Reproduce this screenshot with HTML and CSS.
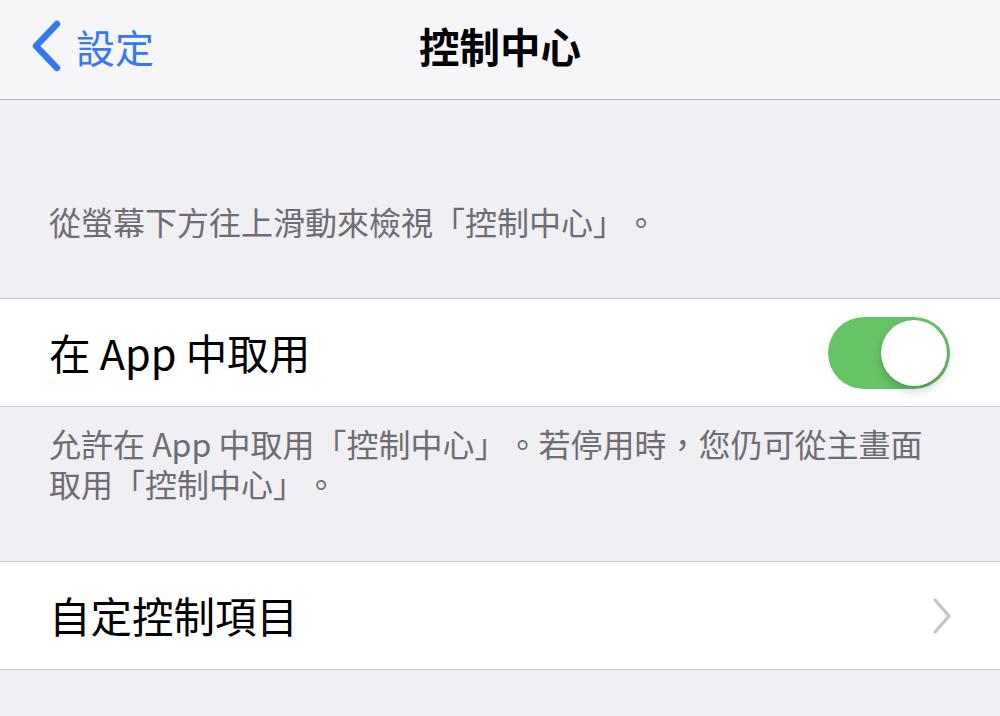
FILE: index.html
```html
<!DOCTYPE html>
<html lang="zh-Hant">
<head>
  <meta charset="UTF-8">
  <meta name="viewport" content="width=device-width, initial-scale=1.0">
  <title>控制中心</title>
  <link rel="stylesheet" href="styles.css">
</head>
<body>
  <div class="nav-bar">
    <div class="back-button">
      <svg class="back-icon" width="32" height="52" viewBox="0 0 32 52">
        <path d="M27 4 L6 26 L27 48" fill="none" stroke="#3478f6" stroke-width="6.5" stroke-linecap="round" stroke-linejoin="round"/>
      </svg>
      <span class="back-text">設定</span>
    </div>
    <h1 class="nav-title">控制中心</h1>
  </div>

  <div class="section-header">
    <p>從螢幕下方往上滑動來檢視「控制中心」。</p>
  </div>

  <div class="group">
    <div class="row">
      <span class="row-label">在 App 中取用</span>
      <div class="switch on">
        <div class="knob"></div>
      </div>
    </div>
  </div>

  <div class="section-footer">
    <p>允許在 App 中取用「控制中心」。若停用時，您仍可從主畫面<br>取用「控制中心」。</p>
  </div>

  <div class="group">
    <div class="row">
      <span class="row-label">自定控制項目</span>
      <svg class="chevron" width="20" height="38" viewBox="0 0 20 38">
        <path d="M3 3 L17 19 L3 35" fill="none" stroke="#c4c4c8" stroke-width="3.2" stroke-linecap="round" stroke-linejoin="round"/>
      </svg>
    </div>
  </div>
</body>
</html>
```

FILE: styles.css
```css
body {
    margin: 0;
    background-color: #efeff4;
    font-family: "Noto Sans CJK TC", "Noto Sans", sans-serif;
    color: #000;
    text-spacing-trim: space-all;
}

p {
    margin: 0;
}

.nav-bar {
    height: 99px;
    background-color: #f6f6f8;
    border-bottom: 1px solid #b4b4b8;
    display: flex;
    align-items: center;
    justify-content: center;
    position: relative;
}

.back-button {
    position: absolute;
    left: 30px;
    top: 0;
    height: 92px;
    display: flex;
    align-items: center;
    gap: 14px;
    color: #3478f6;
}

.back-icon {
    display: block;
}

.back-text {
    font-size: 39px;
    line-height: 1;
}

.nav-title {
    margin: 0 0 7px 0;
    font-size: 40.5px;
    font-weight: 700;
    line-height: 1;
}

.section-header {
    height: 141px;
    padding: 0 49px 57px;
    display: flex;
    flex-direction: column;
    justify-content: flex-end;
    font-size: 32px;
    line-height: 40px;
    color: #6d6d72;
}

.group {
    background-color: #fff;
    border-top: 1px solid #c8c7cc;
    border-bottom: 1px solid #c8c7cc;
}

.row {
    height: 107px;
    padding: 0 50px 0 49px;
    display: flex;
    align-items: center;
    justify-content: space-between;
}

.row-label {
    font-size: 41.5px;
    line-height: 1;
}

.switch {
    width: 122px;
    height: 72px;
    border-radius: 36px;
    background-color: #e9e9eb;
    position: relative;
}

.switch.on {
    background-color: #65c466;
}

.knob {
    position: absolute;
    top: 3px;
    right: 3px;
    width: 66px;
    height: 66px;
    border-radius: 50%;
    background-color: #fff;
    box-shadow: 0 5px 10px rgba(0, 0, 0, 0.18), 0 1px 2px rgba(0, 0, 0, 0.12);
}

.chevron {
    display: block;
    margin-right: -2px;
}

.section-footer {
    padding: 16px 49px 58px;
    font-size: 32px;
    line-height: 40px;
    color: #6d6d72;
}
```
